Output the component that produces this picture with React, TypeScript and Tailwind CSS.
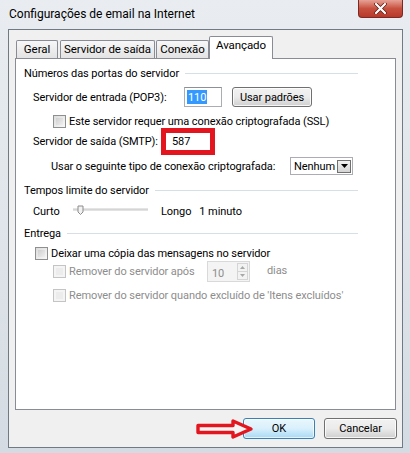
import React from 'react';

const font = { fontFamily: 'Roboto, "Noto Sans", sans-serif' };

function Checkbox({ disabled }: { disabled?: boolean }) {
  return (
    <span
      className={`inline-block w-[13px] h-[13px] border flex-none ${
        disabled
          ? 'border-[#c4c4c4] bg-[#f4f4f4]'
          : 'border-[#8e8f8f] bg-gradient-to-br from-[#dcdcdc] to-[#f8f8f8]'
      }`}
    >
      <span
        className={`block m-[2px] w-[7px] h-[7px] ${
          disabled ? 'bg-[#ececec]' : 'bg-gradient-to-br from-[#cfcfcf] to-[#efefef]'
        }`}
      ></span>
    </span>
  );
}

function GroupHeader({ label, className }: { label: string; className?: string }) {
  return (
    <div className={`flex items-center h-[16px] w-[334px] ml-[8px] ${className ?? ''}`}>
      <span>{label}</span>
      <span className="flex-1 ml-[6px] h-px bg-[#d5dfe5]"></span>
    </div>
  );
}

function WinButton({ label, focused, className }: { label: string; focused?: boolean; className?: string }) {
  return (
    <div
      className={`flex items-center justify-center rounded-[3px] border ${
        focused
          ? 'border-[#3c7fb1] bg-gradient-to-b from-[#eaf6fd] via-[#d9f0fc] to-[#a7d9f5] shadow-[inset_0_0_0_1px_#ffffffaa]'
          : 'border-[#707070] bg-gradient-to-b from-[#f2f2f2] via-[#ebebeb] to-[#cfcfcf] shadow-[inset_0_0_0_1px_#ffffffcc]'
      } ${className ?? ''}`}
    >
      {label}
    </div>
  );
}

function Tab({ label, width, selected }: { label: string; width: string; selected?: boolean }) {
  return selected ? (
    <div
      className={`${width} h-[23px] -mb-px relative z-10 bg-white border border-b-0 border-[#898c95] rounded-t-[2px] flex items-start justify-center pt-[3px] text-[11.5px]`}
    >
      {label}
    </div>
  ) : (
    <div
      className={`${width} h-[18px] border border-b-0 border-[#898c95] rounded-t-[2px] bg-gradient-to-b from-[#f7f7f7] to-[#e3e3e3] flex items-center justify-center text-[11.5px]`}
    >
      {label}
    </div>
  );
}

export default function App() {
  return (
    <div
      className="relative w-[410px] h-[453px] overflow-hidden whitespace-nowrap bg-gradient-to-b from-[#e9edf1] via-[#dfe5ea] to-[#d4dbe2] text-[11px] tracking-[-0.08px] text-black leading-none"
      style={font}
    >
      {/* title bar */}
      <div className="h-[29px] flex items-center pl-[9px] pb-[2px] text-[12px] tracking-normal text-black">
        Configurações de email na Internet
      </div>
      <div className="absolute top-0 right-[7px] w-[45px] h-[18px] rounded-b-[4px] border border-t-0 border-[#7a2a20] bg-gradient-to-b from-[#e6a196] via-[#c7503f] to-[#b8382a] flex items-center justify-center">
        <svg width="13" height="11" viewBox="0 0 13 11">
          <path d="M2 1 L11 10 M11 1 L2 10" stroke="#5a1a12" strokeWidth="3.6" strokeLinecap="round" />
          <path d="M2 1 L11 10 M11 1 L2 10" stroke="#ffffff" strokeWidth="2.2" strokeLinecap="round" />
        </svg>
      </div>

      {/* client area */}
      <div className="ml-[8px] w-[395px] h-[419px] border border-[#6f7a85] bg-[#f0f0f0] flex flex-col">
        {/* tabs */}
        <div className="flex items-end pl-[6px] mt-[5px] h-[23px]">
          <div className="w-[1px]"></div>
          <Tab label="Geral" width="w-[42px]" />
          <div className="w-[2px]"></div>
          <Tab label="Servidor de saída" width="w-[95px]" />
          <div className="w-[1px]"></div>
          <Tab label="Conexão" width="w-[53px]" />
          <Tab label="Avançado" width="w-[64px]" selected />
        </div>

        {/* panel */}
        <div className="ml-[6px] w-[381px] h-[352px] border border-[#898c95] bg-white flex flex-col">
          <GroupHeader label="Números das portas do servidor" className="mt-[6px]" />

          <div className="flex items-center h-[20px] mt-[6px] pl-[17px]">
            <span className="w-[151px]">Servidor de entrada (POP3):</span>
            <div className="w-[38px] h-[20px] border border-[#abadb3] border-t-[#8e9098] flex items-center pl-[2px]">
              <span className="bg-[#3399ff] text-white px-[1px] h-[14px] flex items-center">110</span>
            </div>
            <WinButton label="Usar padrões" className="ml-[10px] w-[80px] h-[20px]" />
          </div>

          <div className="flex items-center h-[16px] mt-[6px] pl-[37px]">
            <Checkbox />
            <span className="ml-[3px]">Este servidor requer uma conexão criptografada (SSL)</span>
          </div>

          <div className="flex items-center h-[27px] mt-[-1px] pl-[17px]">
            <span className="w-[128px]">Servidor de saída (SMTP):</span>
            <div className="w-[54px] h-[27px] border-[5px] border-[#e3161f]">
              <div className="w-full h-full bg-white flex items-center pl-[6px]">587</div>
            </div>
          </div>

          <div className="flex items-center h-[22px] pl-[35px]">
            <span className="w-[239px]">Usar o seguinte tipo de conexão criptografada:</span>
            <div className="w-[63px] h-[18px] border border-[#abadb3] bg-white flex items-center pl-[3px] justify-between pr-[1px]">
              <span>Nenhum</span>
              <div className="w-[14px] h-[13px] border border-[#707070] bg-gradient-to-b from-[#f2f2f2] to-[#d4d4d4] flex items-center justify-center">
                <svg width="7" height="4" viewBox="0 0 7 4">
                  <path d="M0 0 H7 L3.5 4 Z" fill="#000" />
                </svg>
              </div>
            </div>
          </div>

          <GroupHeader label="Tempos limite do servidor" className="mt-[5px]" />

          <div className="flex items-center h-[20px] mt-[3px] pl-[17px]">
            <span className="w-[38px]">Curto</span>
            <svg width="78" height="14" viewBox="0 0 78 14" className="flex-none">
              <rect x="2" y="5" width="75" height="2" fill="#e2e2e2" />
              <line x1="2" y1="5" x2="77" y2="5" stroke="#c8c8c8" strokeWidth="1" />
              <path d="M7 2 H12 V8 L9.5 10.5 L7 8 Z" fill="#f2f2f2" stroke="#8c8c8c" strokeWidth="1" />
            </svg>
            <span className="ml-[12px]">Longo</span>
            <span className="ml-[8px]">1 minuto</span>
          </div>

          <GroupHeader label="Entrega" className="mt-[4px]" />

          <div className="flex items-center h-[16px] mt-[4px] pl-[19px]">
            <Checkbox />
            <span className="ml-[3px]">Deixar uma cópia das mensagens no servidor</span>
          </div>

          <div className="flex items-center h-[21px] pl-[37px] text-[#8d8d8d]">
            <Checkbox disabled />
            <span className="ml-[3px] w-[138px]">Remover do servidor após</span>
            <div className="w-[43px] h-[21px] border border-[#d9d9d9] bg-[#f4f4f4] flex items-center justify-between pl-[4px] pr-[1px]">
              <span className="pt-[3px]">10</span>
              <div className="flex flex-col w-[11px] h-[17px] border border-[#d5d5d5] bg-[#f3f3f3]">
                <div className="flex-1 flex items-center justify-center border-b border-[#d5d5d5]">
                  <svg width="5" height="3" viewBox="0 0 5 3"><path d="M0 3 L2.5 0 L5 3 Z" fill="#a8a8a8" /></svg>
                </div>
                <div className="flex-1 flex items-center justify-center">
                  <svg width="5" height="3" viewBox="0 0 5 3"><path d="M0 0 L5 0 L2.5 3 Z" fill="#a8a8a8" /></svg>
                </div>
              </div>
            </div>
            <span className="ml-[17px] -mt-[3px]">dias</span>
          </div>

          <div className="flex items-center h-[16px] mt-[5px] pl-[37px] text-[#8d8d8d]">
            <Checkbox disabled />
            <span className="ml-[3px]">Remover do servidor quando excluído de 'Itens excluídos'</span>
          </div>
        </div>

        {/* buttons */}
        <div className="relative flex items-center justify-end gap-[9px] mt-[8px] pr-[5px]">
          <WinButton label="OK" focused className="w-[72px] h-[21px]" />
          <WinButton label="Cancelar" className="w-[73px] h-[21px]" />
          <svg
            width="60"
            height="22"
            viewBox="0 0 60 22"
            className="absolute left-[186px] top-[0px]"
          >
            <path
              d="M3 7.5 H38 V3 L56 11 L38 19 V14.5 H3 Z"
              fill="#f4f4f4"
              stroke="#e3161f"
              strokeWidth="3.4"
              strokeLinejoin="round"
            />
          </svg>
        </div>
      </div>
    </div>
  );
}
